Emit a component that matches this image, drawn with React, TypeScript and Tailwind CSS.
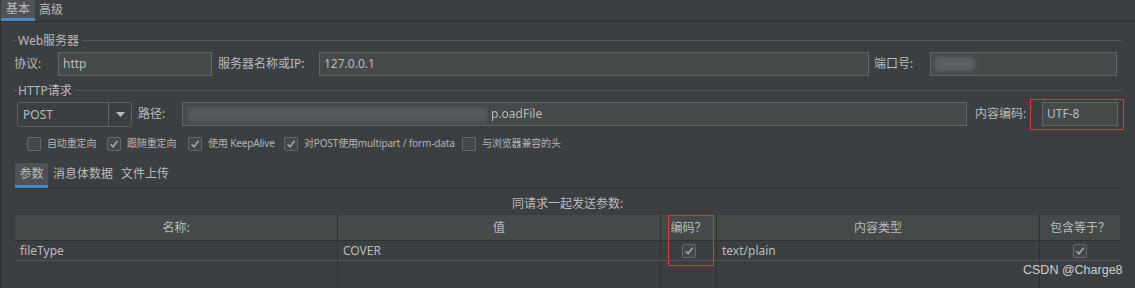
import React from "react";

const font = "font-['Noto_Sans','Noto_Sans_CJK_SC',sans-serif]";

function Check({ checked }: { checked: boolean }) {
  return (
    <div className="w-[14px] h-[14px] border border-[#66696b] bg-[#43474a] rounded-[2px] flex items-center justify-center shrink-0">
      {checked && (
        <svg width="10" height="10" viewBox="0 0 10 10">
          <path d="M1.6 5.2 L4 7.7 L8.6 1.8" fill="none" stroke="#a2a2a2" strokeWidth="1.6" />
        </svg>
      )}
    </div>
  );
}

function Sep({ title }: { title: string }) {
  return (
    <div className="flex items-center h-[15px] ml-[12px] w-[1109px]">
      <div className="w-[4px] h-px bg-[#555758]" />
      <span className="px-[1px] text-[12px] leading-[15px] whitespace-nowrap">{title}</span>
      <div className="flex-1 h-px bg-[#555758] ml-[2px]" />
    </div>
  );
}

function Input({ className, children }: { className: string; children?: React.ReactNode }) {
  return (
    <div className={`h-[24px] border border-[#646464] bg-[#45494a] flex items-center pl-[4px] text-[12px] overflow-hidden ${className}`}>
      {children}
    </div>
  );
}

const cols = [
  "w-[323px] border-r border-[#2f3133]",
  "w-[323px] border-r border-[#2f3133]",
  "w-[56px] border-r border-[#2f3133]",
  "w-[323px] border-r border-[#2f3133]",
  "w-[80px]",
];

const items: { w: string; checked: boolean; label: string }[] = [
  { w: "w-[80px]", checked: false, label: "自动重定向" },
  { w: "w-[81px]", checked: true, label: "跟随重定向" },
  { w: "w-[96px]", checked: true, label: "使用 KeepAlive" },
  { w: "w-[178px]", checked: true, label: "对POST使用multipart / form-data" },
  { w: "w-[160px]", checked: false, label: "与浏览器兼容的头" },
];

export default function App() {
  return (
    <div className={`relative w-[1135px] h-[288px] bg-[#3c3f41] text-[#bbbbbb] overflow-hidden ${font}`}>
      {/* top tabs */}
      <div className="flex h-[22px] border-b border-[#2f3133]">
        <div className="w-[34px] ml-[1px] bg-[#4e5254] border-b-[3px] border-[#4a88c7] flex items-center justify-center text-[12px] leading-none">
          基本
        </div>
        <div className="px-[4px] flex items-center text-[12px] leading-none pb-[2px]">高级</div>
      </div>

      <div className="border-l border-[#2f3133] h-[266px] mr-[2px]">
        {/* Web server */}
        <div className="pt-[11px]">
          <Sep title="Web服务器" />
        </div>
        <div className="flex items-center mt-[4px] ml-[13px] h-[24px]">
          <span className="w-[44px] text-[12px]">协议:</span>
          <Input className="w-[154px]">http</Input>
          <span className="ml-[6px] w-[101px] text-[12px]">服务器名称或IP:</span>
          <Input className="w-[550px]">127.0.0.1</Input>
          <span className="ml-[5px] w-[56px] text-[12px]">端口号:</span>
          <Input className="w-[187px]">
            <div className="w-[40px] h-[14px] bg-[#5b5f61] blur-[2px]" />
          </Input>
        </div>

        {/* HTTP request */}
        <div className="mt-[7px]">
          <Sep title="HTTP请求" />
        </div>
        <div className="flex items-start mt-[4px] ml-[16px] h-[25px]">
          <div className="w-[115px] h-[25px] border border-[#5e6060] rounded-[3px] flex items-stretch text-[12px]">
            <div className="flex-1 flex items-center pl-[5px]">POST</div>
            <div className="w-[23px] border-l border-[#5e6060] flex items-center justify-center">
              <svg width="9" height="5" viewBox="0 0 9 5">
                <path d="M0 0 H9 L4.5 5 Z" fill="#bbbbbb" />
              </svg>
            </div>
          </div>
          <span className="ml-[6px] w-[44px] h-[24px] flex items-center text-[12px]">路径:</span>
          <Input className="w-[785px]">
            <div className="w-[300px] h-[15px] bg-[#56595b] blur-[2px]" />
            <span className="ml-[4px] blur-[0.7px]">p.oad</span>
            <span>File</span>
          </Input>
          <span className="ml-[8px] w-[67px] h-[24px] flex items-center text-[12px]">内容编码:</span>
          <div className="relative">
            <Input className="w-[76px]">UTF-8</Input>
            <div className="absolute left-[-12px] top-[-3px] w-[94px] h-[31px] border border-[#e0383a]" />
          </div>
        </div>

        {/* checkboxes */}
        <div className="flex items-center mt-[7px] ml-[26px] h-[19px]">
          {items.map((it) => (
            <div key={it.label} className={`flex items-center ${it.w}`}>
              <Check checked={it.checked} />
              <span className="ml-[6px] text-[10px] tracking-[-0.15px] whitespace-nowrap text-[#b4b4b4]">{it.label}</span>
            </div>
          ))}
        </div>

        {/* sub tabs */}
        <div className="flex mt-[10px] ml-[14px] w-[1105px] h-[26px] border-b border-[#2f3133] text-[12px]">
          <div className="w-[33px] bg-[#4e5254] border-b-[3px] border-[#4a88c7] flex items-center justify-center">参数</div>
          <div className="px-[4px] ml-[1px] flex items-center pb-[3px]">消息体数据</div>
          <div className="px-[4px] flex items-center pb-[3px]">文件上传</div>
        </div>

        {/* caption */}
        <div className="ml-[14px] w-[1105px] mt-[7px] h-[16px] flex items-center justify-center text-[12px]">
          同请求一起发送参数:
        </div>

        {/* table */}
        <div className="relative ml-[14px] w-[1105px] mt-[3px] flex flex-col h-[73px]">
          <div className="flex h-[26px] bg-[#45494a] border-b border-[#2f3133] text-[12px]">
            {["名称:", "值", "编码？", "内容类型", "包含等于？"].map((h, i) => (
              <div key={h} className={`${cols[i]} flex items-center justify-center whitespace-nowrap`}>
                {h}
              </div>
            ))}
          </div>
          <div className="flex h-[20px] border-b border-[#505456] text-[12px]">
            <div className={`${cols[0]} flex items-center pl-[5px]`}>fileType</div>
            <div className={`${cols[1]} flex items-center pl-[5px]`}>COVER</div>
            <div className={`${cols[2]} flex items-center justify-center`}>
              <Check checked />
            </div>
            <div className={`${cols[3]} flex items-center pl-[5px]`}>text/plain</div>
            <div className={`${cols[4]} flex items-center justify-center`}>
              <Check checked />
            </div>
          </div>
          <div className="flex flex-1">
            {cols.map((c, i) => (
              <div key={i} className={c} />
            ))}
          </div>
          <div className="absolute left-[653px] top-0 w-[46px] h-[51px] border border-[#e0383a]" />
        </div>
      </div>

      <div className="absolute left-[1023px] top-[262px] text-[12.5px] leading-[16px] text-[#cfcfcf] font-['Liberation_Sans',sans-serif]">
        CSDN @Charge8
      </div>
    </div>
  );
}
